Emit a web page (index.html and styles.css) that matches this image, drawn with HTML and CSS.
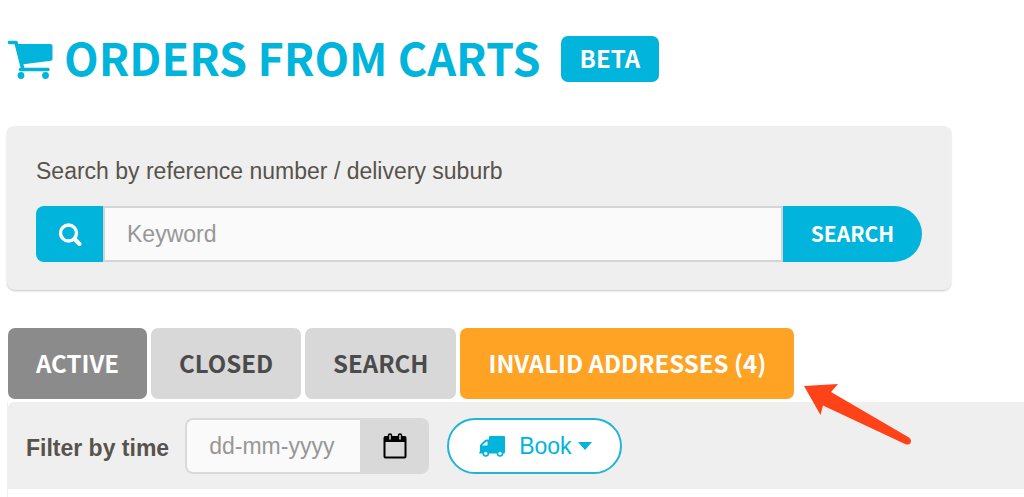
FILE: index.html
```html
<!DOCTYPE html>
<html lang="en">
<head>
<meta charset="utf-8">
<meta name="viewport" content="width=device-width, initial-scale=1">
<title>Orders from carts</title>
<link rel="stylesheet" href="styles.css">
</head>
<body>
<main class="page">
  <header class="page-header">
    <svg class="cart-icon" viewBox="0 0 46 40" aria-hidden="true">
      <path d="M2.500 3.500H9L15.500 29" fill="none" stroke="currentColor" stroke-width="3.600" stroke-linecap="round" stroke-linejoin="round"/>
      <path d="M10 5H43.500Q45.500 5 45.500 7V20Q45.500 21.500 44 21.800L14.500 25.500Z" fill="currentColor"/>
      <path d="M13.500 30.500H41" stroke="currentColor" stroke-width="3.400" stroke-linecap="round"/>
      <circle cx="14" cy="36.500" r="3.400" fill="currentColor"/>
      <circle cx="38.500" cy="36.500" r="3.400" fill="currentColor"/>
    </svg>
    <h1 class="title">ORDERS FROM CARTS</h1>
    <span class="badge">BETA</span>
  </header>

  <form class="search-panel">
    <label class="search-label" for="keyword">Search by reference number / delivery suburb</label>
    <div class="search-row">
      <span class="search-addon">
        <svg class="search-icon" viewBox="0 0 24 24" aria-hidden="true">
          <circle cx="10.500" cy="11" r="8" fill="none" stroke="currentColor" stroke-width="3.400"/>
          <path d="M16.500 17L21.500 22" stroke="currentColor" stroke-width="4" stroke-linecap="round"/>
        </svg>
      </span>
      <input class="search-input" id="keyword" type="text" placeholder="Keyword">
      <button class="search-button" type="button">SEARCH</button>
    </div>
  </form>

  <nav class="tabs" aria-label="Orders">
    <button class="tab tab-active" type="button">ACTIVE</button>
    <button class="tab" type="button">CLOSED</button>
    <button class="tab" type="button">SEARCH</button>
    <span class="tab-callout">
      <button class="tab tab-warning" type="button">INVALID ADDRESSES (4)</button>
      <svg class="arrow" viewBox="0 0 108 62" aria-hidden="true">
        <path d="M0 2L34 0L27 8L105 53.500Q108 56 106.500 59Q105 61.500 101 60L19 21.500L16.500 31Z" fill="#ff4218"/>
      </svg>
    </span>
  </nav>

  <section class="results">
    <div class="filter-bar">
      <label class="filter-label" for="date">Filter by time</label>
      <div class="date-group">
        <input class="date-input" id="date" type="text" placeholder="dd-mm-yyyy">
        <button class="date-button" type="button" aria-label="Choose date">
          <svg class="calendar-icon" viewBox="0 0 24 26" aria-hidden="true">
            <path d="M1 4.500Q1 3.500 2 3.500H22Q23 3.500 23 4.500V9H1Z" fill="currentColor"/>
            <rect x="1.500" y="4" width="21" height="20.500" rx="1" fill="none" stroke="currentColor" stroke-width="2"/>
            <rect x="5.500" y="1" width="3" height="6.500" rx="1.500" fill="#d9d9d9" stroke="currentColor" stroke-width="1.500"/>
            <rect x="15.500" y="1" width="3" height="6.500" rx="1.500" fill="#d9d9d9" stroke="currentColor" stroke-width="1.500"/>
          </svg>
        </button>
      </div>
      <button class="book-button" type="button">
        <svg class="truck-icon" viewBox="0 0 26 21" aria-hidden="true">
          <path d="M11 0H25Q26 0 26 1V16Q26 17.500 24.500 17.500H1Q0 17.500 0 16.500Q1 16 1 15V9L5.500 4.500Q6.500 3.500 8 3.500H10V1Q10 0 11 0ZM3 9.500H8.500V5.500H7.500Z" fill="currentColor" fill-rule="evenodd"/>
          <circle cx="6.800" cy="17.500" r="2.500" fill="#fff" stroke="currentColor" stroke-width="1.600"/>
          <circle cx="21" cy="17.500" r="2.500" fill="#fff" stroke="currentColor" stroke-width="1.600"/>
        </svg>
        <span>Book</span>
        <svg class="caret" viewBox="0 0 14 8" aria-hidden="true"><path d="M0 0H14L7 8Z" fill="currentColor"/></svg>
      </button>
    </div>
  </section>
</main>
</body>
</html>
```
FILE: styles.css
```css
* {
  box-sizing: border-box;
}

body {
  margin: 0;
  background: #fff;
  color: #57534c;
  font-family: "Liberation Sans", Arial, sans-serif;
  font-size: 23px;
}

button,
input {
  margin: 0;
  border: 0;
  font: inherit;
}

button {
  cursor: pointer;
}

.page {
  padding: 32px 0 0 7px;
}

.page-header {
  display: flex;
  align-items: center;
  height: 54px;
  margin-bottom: 40px;
  color: #00b4dc;
  font-family: "Noto Sans CJK SC", sans-serif;
  font-weight: 700;
}

.cart-icon {
  width: 46px;
  height: 40px;
  margin-right: 11px;
}

.title {
  margin: 0 20px 0 0;
  padding-bottom: 4px;
  font-size: 45px;
  font-weight: 700;
  line-height: 50px;
  white-space: nowrap;
}

.badge {
  padding: 7px 19px 9px;
  border-radius: 7px;
  background: #00b4dc;
  color: #fff;
  font-size: 24px;
  font-weight: 700;
  line-height: 30px;
}

.search-panel {
  margin-right: 73px;
  padding: 30px 29px 28px;
  border-radius: 8px;
  background: #efefef;
  box-shadow: 0 1px 2px #c8c8c8;
}

.search-label {
  display: block;
  margin-bottom: 20px;
  line-height: 30px;
}

.search-row {
  display: flex;
  height: 56px;
}

.search-addon {
  display: flex;
  align-items: center;
  justify-content: center;
  width: 67px;
  border-radius: 8px 0 0 8px;
  background: #00b4dc;
  color: #fff;
}

.search-icon {
  width: 24px;
  height: 24px;
}

.search-input {
  flex: 1;
  min-width: 0;
  padding: 0 22px;
  border: 2px solid #d4d4d4;
  background: #fafafa;
}

.search-input::placeholder,
.date-input::placeholder {
  color: #979797;
  opacity: 1;
}

.search-button {
  width: 139px;
  padding: 0 0 2px;
  border-radius: 0 28px 28px 0;
  background: #00b4dc;
  color: #fff;
  font-family: "Noto Sans CJK SC", sans-serif;
  font-size: 21px;
  font-weight: 700;
}

.tabs {
  display: flex;
  gap: 4px;
  margin-top: 38px;
  padding-left: 1px;
}

.tab {
  height: 71px;
  padding: 0 28px 3px;
  border-radius: 7px;
  background: #d8d8d8;
  color: #4b4b4b;
  font-family: "Noto Sans CJK SC", sans-serif;
  font-size: 24px;
  font-weight: 700;
  white-space: nowrap;
}

.tab-active {
  background: #8b8b8b;
  color: #fff;
}

.tab-warning {
  background: #ffa325;
  color: #fff;
}

.tab-callout {
  position: relative;
}

.arrow {
  position: absolute;
  top: 56px;
  left: calc(100% + 10px);
  width: 108px;
  height: 62px;
}

.results {
  margin-top: 3px;
  border-left: 1px solid #efefef;
}

.results::after {
  display: block;
  height: 8px;
  content: "";
}

.filter-bar {
  display: flex;
  align-items: center;
  padding: 16px 18px 15px;
  border-radius: 6px 0 0 0;
  background: #efefef;
}

.filter-label {
  margin-right: 16px;
  padding-top: 5px;
  font-weight: 700;
  white-space: nowrap;
}

.date-group {
  display: flex;
  width: 244px;
  height: 56px;
  margin-right: 18px;
}

.date-input {
  flex: 1;
  min-width: 0;
  padding: 0 22px;
  border: 2px solid #d9d9d9;
  border-right: 0;
  border-radius: 8px 0 0 8px;
  background: #fafafa;
}

.date-button {
  display: flex;
  align-items: center;
  justify-content: center;
  width: 69px;
  padding: 0;
  border-radius: 0 8px 8px 0;
  background: #d9d9d9;
  color: #000;
}

.calendar-icon {
  width: 24px;
  height: 26px;
}

.book-button {
  display: flex;
  align-items: center;
  height: 56px;
  padding: 0 28px 0 30px;
  border: 2px solid #20b4d5;
  border-radius: 28px;
  background: #fff;
  color: #00b4dc;
}

.truck-icon {
  width: 26px;
  height: 21px;
  margin-right: 14px;
}

.caret {
  width: 14px;
  height: 8px;
  margin-left: 6px;
}
```
